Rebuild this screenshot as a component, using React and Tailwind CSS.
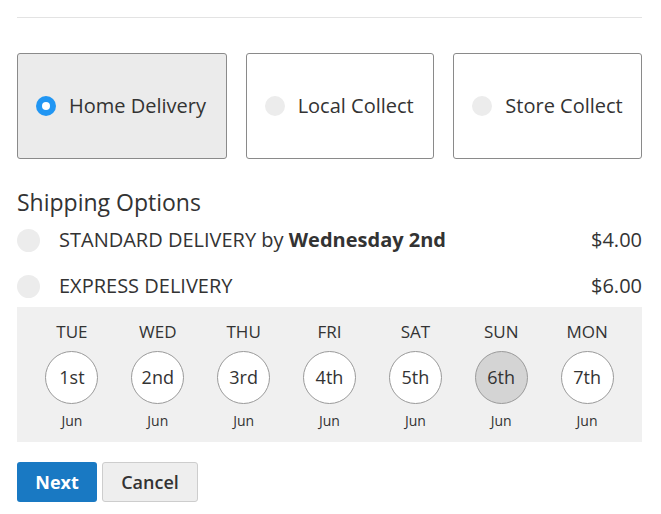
import React, { useState } from 'react';

const methods = [
  { id: 'home', label: 'Home Delivery', width: 'w-[210px]' },
  { id: 'local', label: 'Local Collect', width: 'w-[189px]' },
  { id: 'store', label: 'Store Collect', width: 'w-[189px]' },
];

const days = [
  { day: 'TUE', date: '1st' },
  { day: 'WED', date: '2nd' },
  { day: 'THU', date: '3rd' },
  { day: 'FRI', date: '4th' },
  { day: 'SAT', date: '5th' },
  { day: 'SUN', date: '6th' },
  { day: 'MON', date: '7th' },
];

const Radio = ({ checked, size = 'w-5 h-5' }) =>
  checked ? (
    <span className={`${size} rounded-full bg-[#2196f3] flex items-center justify-center shrink-0`}>
      <span className="w-2 h-2 rounded-full bg-white" />
    </span>
  ) : (
    <span className={`${size} rounded-full bg-[#ececec] shrink-0`} />
  );

const App = () => {
  const [method, setMethod] = useState('home');
  const [selectedDay, setSelectedDay] = useState('6th');

  return (
    <div className="min-h-screen bg-white text-[#333] font-['Open_Sans',sans-serif]">
      <div className="ml-[17px] w-[625px] pt-[17px]">
        <div className="border-t border-[#e3e3e3]" />

        {/* Delivery method cards */}
        <div className="mt-[35px] flex gap-[19px]">
          {methods.map((m) => (
            <button
              key={m.id}
              onClick={() => setMethod(m.id)}
              className={`${m.width} h-[106px] flex items-center gap-[13px] pl-[18px] rounded-[3px] border border-[#8a8a8a] ${
                method === m.id ? 'bg-[#ebebeb]' : 'bg-white'
              }`}
            >
              <Radio checked={method === m.id} />
              <span className="text-[20px] leading-none">{m.label}</span>
            </button>
          ))}
        </div>

        {/* Shipping options */}
        <h2 className="mt-[30px] text-[23px] leading-[26px] font-medium">Shipping Options</h2>
        <div className="flex items-center h-[50px]">
          <Radio checked={false} size="w-[23px] h-[23px]" />
          <span className="ml-[19px] text-[20px] flex-1">
            STANDARD DELIVERY by <strong className="font-bold">Wednesday 2nd</strong>
          </span>
          <span className="text-[20px]">$4.00</span>
        </div>
        <div className="flex items-center h-[42px]">
          <Radio checked={false} size="w-[23px] h-[23px]" />
          <span className="ml-[19px] text-[20px] flex-1">EXPRESS DELIVERY</span>
          <span className="text-[20px]">$6.00</span>
        </div>

        {/* Day picker */}
        <div className="bg-[#f0f0f0] px-3 pt-[15px] pb-[12px] grid grid-cols-7">
          {days.map((d) => (
            <div key={d.date} className="flex flex-col items-center">
              <span className="text-[17px] leading-[20px]">{d.day}</span>
              <button
                onClick={() => setSelectedDay(d.date)}
                className={`mt-[9px] w-[53px] h-[53px] rounded-full border border-[#9a9a9a] flex items-center justify-center text-[18px] ${
                  selectedDay === d.date ? 'bg-[#d4d4d4]' : 'bg-white'
                }`}
              >
                {d.date}
              </button>
              <span className="mt-[8px] text-[14px] leading-[18px]">Jun</span>
            </div>
          ))}
        </div>

        {/* Actions */}
        <div className="mt-[20px] flex gap-[5px]">
          <button className="w-[80px] h-[40px] rounded-[3px] bg-[#1979c3] text-white text-[18px] font-bold">
            Next
          </button>
          <button className="w-[96px] h-[40px] rounded-[3px] bg-[#eeeeee] border border-[#cdcdcd] text-[#333] text-[18px] font-semibold">
            Cancel
          </button>
        </div>
      </div>
    </div>
  );
};

export default App;
